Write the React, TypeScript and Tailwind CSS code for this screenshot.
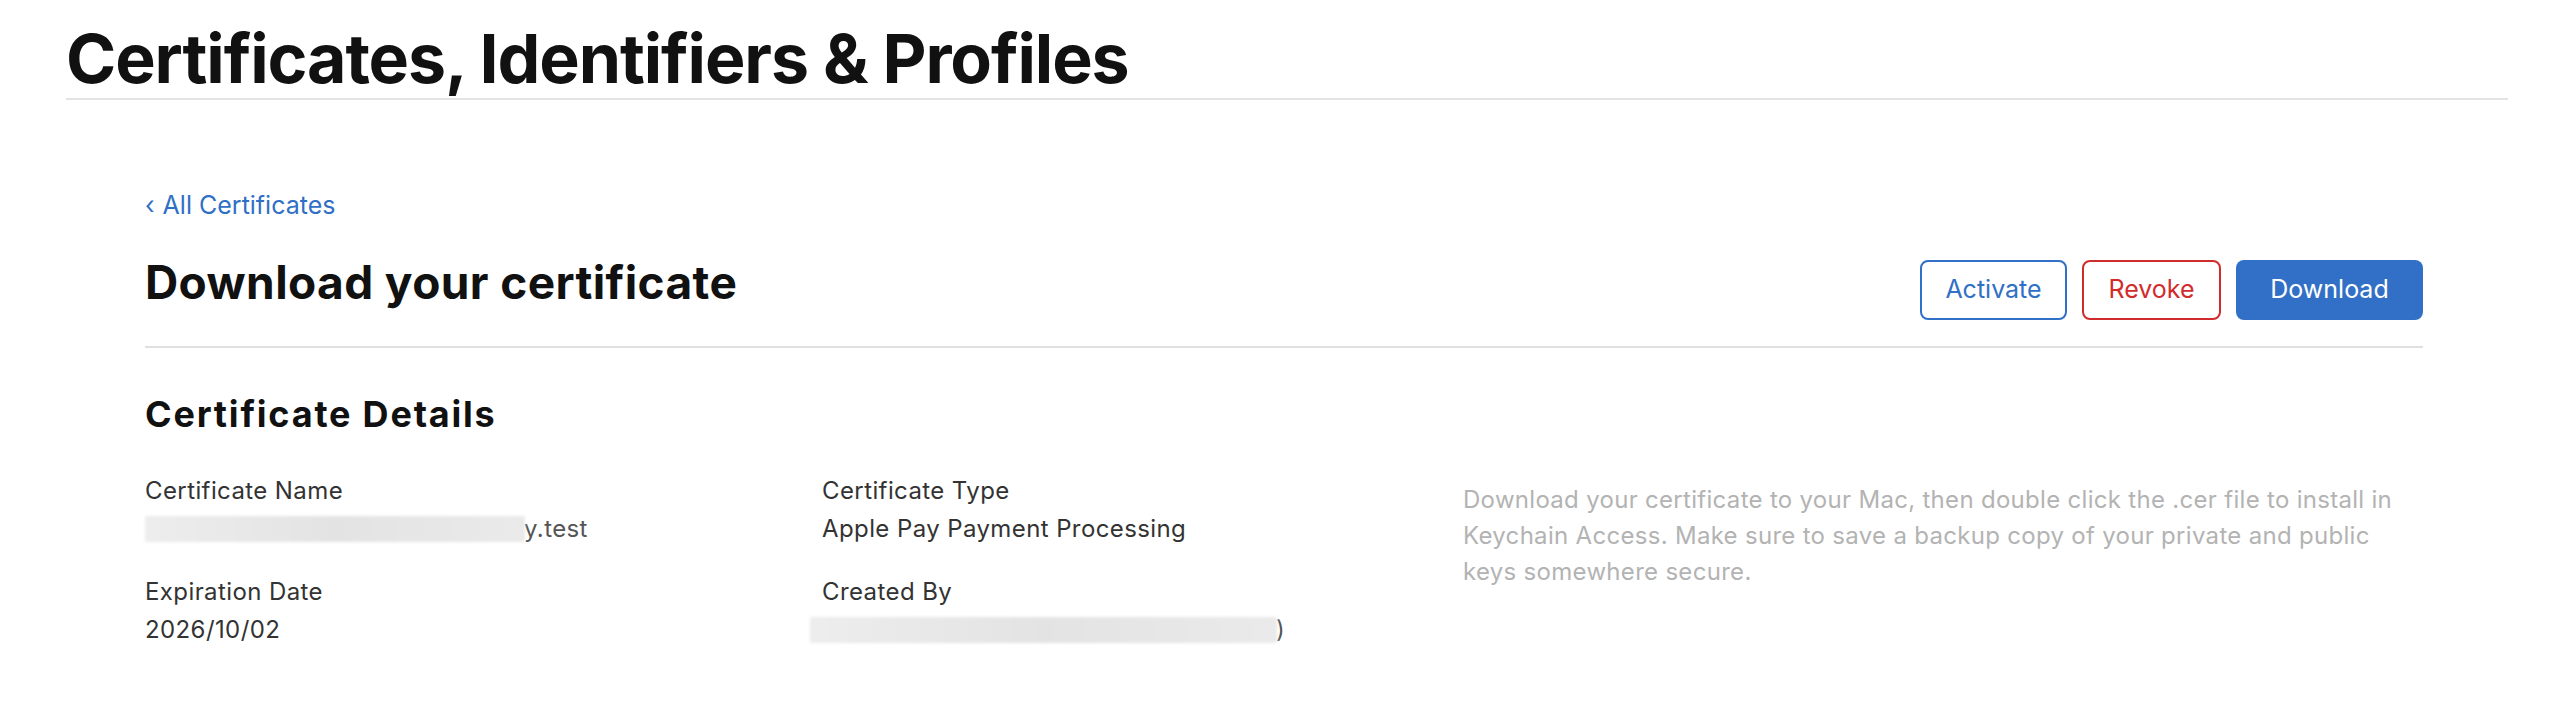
import React from 'react';

type Field = {
  label: string;
  value?: string;
  blurWidth?: number;
  tail?: string;
};

const leftFields: Field[] = [
  { label: 'Certificate Name', blurWidth: 380, tail: 'y.test' },
  { label: 'Expiration Date', value: '2026/10/02' },
];

const middleFields: Field[] = [
  { label: 'Certificate Type', value: 'Apple Pay Payment Processing' },
  { label: 'Created By', blurWidth: 467, tail: ')' },
];

function Redacted({ width }: { width: number }) {
  // stand-in for the blurred (redacted) value in the screenshot
  return (
    <span
      className="inline-block h-[26px] align-middle rounded-[2px] bg-linear-to-r from-[#ededed] via-[#e3e3e3] to-[#eaeaea] blur-[1.5px]"
      style={{ width }}
    />
  );
}

function FieldItem({ field, shiftBlur }: { field: Field; shiftBlur?: boolean }) {
  return (
    <div className="text-[24px] leading-[38px] tracking-[0.4px] text-[#333333]">
      <div>{field.label}</div>
      <div className="flex h-[38px] items-center">
        {field.blurWidth ? (
          <>
            <span className={shiftBlur ? '-ml-[12px] flex items-center' : 'flex items-center'}>
              <Redacted width={field.blurWidth} />
            </span>
            {field.tail && <span className="-ml-px text-[#555555]">{field.tail}</span>}
          </>
        ) : (
          field.value
        )}
      </div>
    </div>
  );
}

export default function App() {
  return (
    <div className="min-h-screen bg-white font-['Inter','Noto_Sans',sans-serif] antialiased">
      <header className="mx-[66px] border-b-2 border-[#e3e3e3] pt-[24px] pb-[6px]">
        <h1 className="text-[68px] leading-[68px] font-bold tracking-[-1.1px] text-[#111111]">
          Certificates, Identifiers &amp; Profiles
        </h1>
      </header>

      <main className="ml-[145px] mr-[151px]">
        <a href="#" className="block mt-[89px] w-max text-[25px] leading-[32px] text-[#2f6fc6]">
          <span className="mr-[8px]">‹</span>All Certificates
        </a>

        <div className="mt-[31px] flex items-start justify-between border-b-2 border-[#e0e0e0] pb-[26px]">
          <h2 className="text-[46px] leading-[60px] font-bold tracking-[0.4px] text-[#111111]">
            Download your certificate
          </h2>
          <div className="mt-[8px] flex gap-[15px]">
            <button className="h-[60px] w-[147px] rounded-[8px] border-2 border-[#3070c6] bg-white text-[25px] text-[#3070c6]">
              Activate
            </button>
            <button className="h-[60px] w-[139px] rounded-[8px] border-2 border-[#d12c2c] bg-white text-[25px] text-[#d12c2c]">
              Revoke
            </button>
            <button className="h-[60px] w-[187px] rounded-[8px] bg-[#3170c6] text-[25px] text-white">
              Download
            </button>
          </div>
        </div>

        <h3 className="mt-[46px] text-[36px] leading-[40px] font-bold tracking-[1.8px] text-[#111111]">
          Certificate Details
        </h3>

        <div className="mt-[38px] grid grid-cols-[677px_641px_1fr]">
          <div className="flex flex-col gap-[25px]">
            {leftFields.map((f) => (
              <FieldItem key={f.label} field={f} />
            ))}
          </div>
          <div className="flex flex-col gap-[25px]">
            {middleFields.map((f) => (
              <FieldItem key={f.label} field={f} shiftBlur />
            ))}
          </div>
          <p className="mt-[10px] text-[24px] leading-[36px] tracking-[0.3px] text-[#b3b3b3]">
            Download your certificate to your Mac, then double click the .cer file to install in Keychain
            Access. Make sure to save a backup copy of your private and public keys somewhere secure.
          </p>
        </div>
      </main>
    </div>
  );
}
